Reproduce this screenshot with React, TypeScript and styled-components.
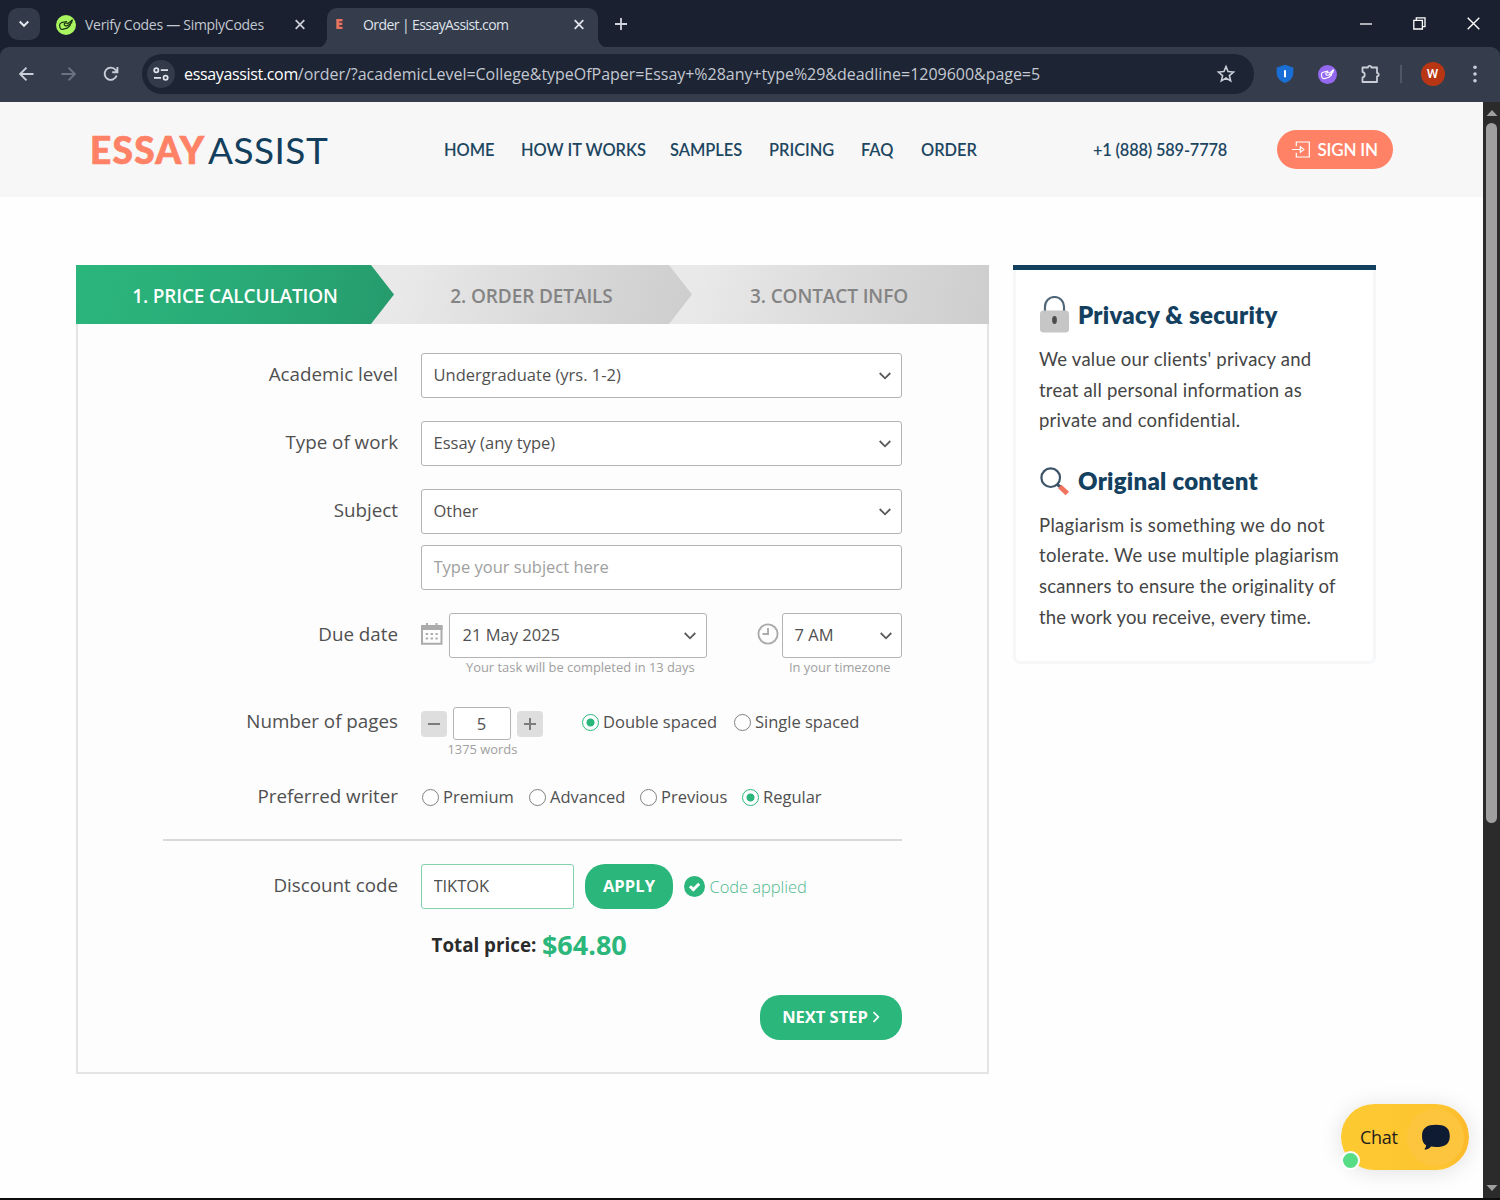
import React from "react";
import styled, { createGlobalStyle } from "styled-components";

const GlobalStyle = createGlobalStyle`
  * { box-sizing: border-box; }
  body { margin: 0; background: #fff; overflow: hidden; }
  svg { display: block; flex: none; }
`;

const sans = `"Open Sans", "Noto Sans", sans-serif`;
const lato = `Lato, "Open Sans", sans-serif`;

const Window = styled.div`
  width: 1500px;
  height: 1200px;
  display: flex;
  flex-direction: column;
  overflow: hidden;
  background: #fff;
  border-bottom: 2px solid #0d0d0d;
`;

/* ---------- browser chrome ---------- */

const TabStrip = styled.div`
  height: 47px;
  flex: none;
  display: flex;
  align-items: flex-start;
  background: #1a202f;
  font-family: ${sans};
`;

const TabSearch = styled.button`
  width: 32px;
  height: 32px;
  margin: 8px 0 0 8px;
  padding: 0;
  border: 0;
  border-radius: 10px;
  background: #333a49;
  display: grid;
  place-items: center;
`;

const Tab = styled.div<{ $active?: boolean; $w: number; $pl: number; $gap: number }>`
  position: relative;
  width: ${(p) => p.$w}px;
  height: ${(p) => (p.$active ? 40 : 33)}px;
  margin-top: ${(p) => (p.$active ? 7.5 : 8)}px;
  margin-right: ${(p) => (p.$active ? 0 : 8)}px;
  padding-left: ${(p) => p.$pl}px;
  padding-right: 12px;
  padding-bottom: ${(p) => (p.$active ? 6 : 0)}px;
  display: flex;
  align-items: center;
  gap: ${(p) => p.$gap}px;
  border-radius: 10px 10px 0 0;
  background: ${(p) => (p.$active ? "#353c4b" : "transparent")};
  color: ${(p) => (p.$active ? "#dfe3ea" : "#c2c8d2")};
  &::before,
  &::after {
    content: "";
    display: ${(p) => (p.$active ? "block" : "none")};
    position: absolute;
    bottom: 0;
    width: 10px;
    height: 10px;
  }
  &::before {
    left: -10px;
    background: radial-gradient(circle at 0 0, transparent 9.5px, #353c4b 10px);
  }
  &::after {
    right: -10px;
    background: radial-gradient(circle at 100% 0, transparent 9.5px, #353c4b 10px);
  }
`;

const TabTitle = styled.span<{ $ls: number }>`
  flex: 1;
  font-size: 14px;
  line-height: 20px;
  white-space: nowrap;
  letter-spacing: ${(p) => p.$ls}px;
`;

const TabLetter = styled.span`
  width: 10px;
  padding-bottom: 1px;
  font: 800 14.5px/20px ${sans};
  color: #e8735f;
`;

const StripIcon = styled.div<{ $ml: number }>`
  height: 47px;
  margin-left: ${(p) => p.$ml}px;
  display: flex;
  align-items: center;
`;

const ToolbarBack = styled.div`
  flex: none;
  background: #1a202f;
`;

const Toolbar = styled.div`
  height: 55px;
  display: flex;
  align-items: center;
  background: #353c4b;
  border-radius: 9px 9px 0 0;
  padding: 0 0 1px 17px;
`;

const NavIcons = styled.div`
  display: flex;
  gap: 22px;
  width: 125px;
`;

const Omnibox = styled.div`
  width: 1112px;
  height: 40px;
  border-radius: 20px;
  background: #1d2433;
  display: flex;
  align-items: center;
  padding: 0 18px 0 5px;
`;

const SiteInfo = styled.div`
  width: 28px;
  height: 28px;
  border-radius: 50%;
  background: #333b4a;
  display: grid;
  place-items: center;
  margin-right: 9px;
`;

const Url = styled.span`
  flex: 1;
  white-space: nowrap;
  font: 400 16px/22px ${sans};
  letter-spacing: -0.03px;
  color: #c3c8d1;
  b {
    font-weight: 400;
    color: #fff;
    letter-spacing: -0.34px;
  }
`;

const Extensions = styled.div`
  display: grid;
  grid-template-columns: 42px 43px 42px 20px 43px 42px;
  align-items: center;
  justify-items: center;
  margin-left: 10px;
`;

const Divider = styled.i`
  width: 2px;
  height: 18px;
  background: #4f5665;
`;

const Avatar = styled.div`
  width: 24px;
  height: 24px;
  border-radius: 50%;
  background: #b93615;
  color: #fff;
  font: 500 13px/24px Roboto, sans-serif;
  text-align: center;
`;

/* ---------- page ---------- */

const Viewport = styled.div`
  flex: 1;
  display: flex;
  min-height: 0;
`;

const Page = styled.div`
  position: relative;
  width: 1483px;
  background: #fefefe;
`;

const Scrollbar = styled.div`
  width: 17px;
  background: #2b2b2b;
  display: flex;
  flex-direction: column;
  align-items: center;
  padding: 7px 0 6px;
`;

const Thumb = styled.div`
  width: 11px;
  height: 700px;
  margin-top: 6px;
  margin-bottom: auto;
  border-radius: 6px;
  background: #9f9f9f;
`;

const SiteHeader = styled.header`
  height: 95px;
  background: #f7f7f7;
  display: flex;
  align-items: center;
  padding-left: 90px;
  font-family: ${lato};
`;

const Logo = styled.div`
  width: 354px;
  display: flex;
  align-items: center;
  font-size: 37px;
  line-height: 40px;
  color: #143f5c;
  white-space: nowrap;
`;

const LogoStrong = styled.span`
  width: 118px;
  font-weight: 900;
  letter-spacing: 1.3px;
  -webkit-text-stroke: 0.7px #ff8266;
  color: #ff8266;
`;

const LogoLight = styled.span`
  font-weight: 400;
  letter-spacing: 0.45px;
`;

const Nav = styled.nav`
  display: grid;
  grid-template-columns: 51px 123px 73px 66px 34px 56px;
  column-gap: 26px;
  width: 649px;
`;

const NavLink = styled.a`
  font-size: 16.4px;
  line-height: 24px;
  font-weight: 600;
  color: #1d4661;
  white-space: nowrap;
`;

const Phone = styled(NavLink)`
  width: 134px;
  letter-spacing: -0.18px;
`;

const SignIn = styled.button`
  width: 116.5px;
  height: 39px;
  margin-left: 49.5px;
  padding: 0 0 0 15px;
  border: 0;
  border-radius: 20px;
  background: #ff8266;
  color: #fff;
  display: flex;
  align-items: center;
  gap: 7px;
  font: 600 17px/24px ${lato};
  white-space: nowrap;
  letter-spacing: -0.2px;
`;

const Main = styled.main`
  display: flex;
  align-items: flex-start;
  gap: 24px;
  padding: 68px 0 0 76px;
`;

const OrderCard = styled.section`
  width: 913px;
`;

const Steps = styled.div`
  height: 59px;
  display: flex;
`;

const Step = styled.div<{ $active?: boolean; $last?: boolean; $w: number; $z: number }>`
  position: relative;
  z-index: ${(p) => p.$z};
  width: ${(p) => p.$w}px;
  margin-right: ${(p) => (p.$last ? 0 : -23)}px;
  padding-top: 2px;
  display: grid;
  place-items: center;
  white-space: nowrap;
  font: 600 19px/24px ${sans};
  letter-spacing: ${(p) => (p.$active ? -0.15 : -0.11)}px;
  color: ${(p) => (p.$active ? "#fff" : "#848484")};
  background: ${(p) =>
    p.$active
      ? "linear-gradient(105deg, #2bb67c 0%, #29ab77 50%, #269b6c 100%)"
      : "linear-gradient(105deg, #e9e9e9 10%, #dadada 55%, #cdcdcd 100%)"};
  clip-path: ${(p) =>
    p.$last ? "none" : "polygon(0 0, calc(100% - 23px) 0, 100% 50%, calc(100% - 23px) 100%, 0 100%)"};
`;

const Form = styled.div`
  height: 750px;
  padding: 29px 0 0 0;
  border: 2px solid #e4e4e4;
  border-top: 0;
  background: #fdfdfd;
  display: flex;
  flex-direction: column;
  font-family: ${sans};
  color: #505050;
`;

const Row = styled.div<{ $h: number; $top?: number }>`
  height: ${(p) => p.$h}px;
  margin-top: ${(p) => p.$top ?? 0}px;
  flex: none;
  display: grid;
  grid-template-columns: 320px 481px;
  column-gap: 23px;
`;

const Label = styled.label<{ $pt?: number }>`
  padding-top: ${(p) => p.$pt ?? 7}px;
  text-align: right;
  font-size: 18.8px;
  line-height: 28px;
  white-space: nowrap;
`;

const Stack = styled.div`
  display: flex;
  flex-direction: column;
  gap: 11px;
`;

const SelectBox = styled.div<{ $w?: number; $pl?: number; $pr?: number }>`
  width: ${(p) => p.$w ?? 481}px;
  height: 45px;
  flex: none;
  border: 1px solid #b3b3b3;
  border-radius: 3px;
  background: #fff;
  display: flex;
  align-items: center;
  justify-content: space-between;
  padding: 0 ${(p) => p.$pr ?? 9.5}px 2px ${(p) => p.$pl ?? 11.5}px;
  font-size: 16.5px;
  line-height: 24px;
  white-space: nowrap;
  svg {
    margin-top: 2px;
  }
`;

const TextInput = styled.input<{ $w: number; $applied?: boolean }>`
  width: ${(p) => p.$w}px;
  height: 45px;
  border: 1px solid ${(p) => (p.$applied ? "#83d2ae" : "#b3b3b3")};
  border-radius: 3px;
  background: #fff;
  padding: 0 11.5px 2px;
  font: 400 16.5px/24px ${sans};
  letter-spacing: ${(p) => (p.$applied ? -0.05 : 0)}px;
  color: #505050;
  outline: none;
  &::placeholder {
    color: #a0a0a0;
    opacity: 1;
  }
`;

const Inline = styled.div`
  display: flex;
  align-items: flex-start;
`;

const IconCell = styled.div<{ $w: number; $ml?: number }>`
  width: ${(p) => p.$w}px;
  margin-left: ${(p) => p.$ml ?? 0}px;
  padding-top: 10px;
`;

const Hint = styled.div<{ $ml?: number }>`
  margin-left: ${(p) => p.$ml ?? 0}px;
  font-size: 12.9px;
  line-height: 18px;
  color: #a0a0a0;
  white-space: nowrap;
`;

const Counter = styled.div`
  display: flex;
  align-items: center;
  gap: 6px;
`;

const CountButton = styled.button`
  width: 26px;
  height: 26px;
  padding: 0;
  border: 0;
  border-radius: 4px;
  background: #dedede;
  display: grid;
  place-items: center;
`;

const CountInput = styled.input`
  width: 58px;
  height: 33px;
  border: 1px solid #b3b3b3;
  border-radius: 3px;
  background: #fff;
  padding: 0 1px 0 0;
  text-align: center;
  font: 400 16.5px/24px ${sans};
  color: #505050;
  outline: none;
`;

const RadioGroup = styled.div<{ $ml?: number; $mt: number; $cols: string }>`
  margin: ${(p) => p.$mt}px 0 0 ${(p) => p.$ml ?? 0}px;
  display: grid;
  grid-template-columns: ${(p) => p.$cols};
  align-items: start;
`;

const RadioLabel = styled.label`
  display: flex;
  align-items: center;
  gap: 4px;
  font-size: 16.5px;
  line-height: 24px;
  white-space: nowrap;
`;

const Dot = styled.span<{ $on?: boolean }>`
  width: 17px;
  height: 17px;
  flex: none;
  border-radius: 50%;
  border: 1px solid ${(p) => (p.$on ? "#2bb67c" : "#808080")};
  background: ${(p) => (p.$on ? "radial-gradient(circle, #2bb67c 3.6px, #fff 4.4px)" : "#fff")};
`;

const Rule = styled.hr`
  width: 739px;
  height: 1.5px;
  flex: none;
  margin: 24px 0 0 85px;
  border: 0;
  background: #dadada;
`;

const Apply = styled.button`
  width: 88px;
  height: 45px;
  margin-left: 11px;
  padding: 0;
  border: 0;
  border-radius: 20px;
  background: #2bb67c;
  color: #fff;
  font: 700 16.5px/24px ${sans};
  letter-spacing: 0.1px;
`;

const Applied = styled.div`
  height: 46px;
  margin-left: 10.5px;
  display: flex;
  align-items: center;
  gap: 5px;
  font-size: 16.5px;
  font-weight: 300;
  letter-spacing: -0.05px;
  color: #4fb98d;
  white-space: nowrap;
`;

const Total = styled.div`
  display: flex;
  align-items: center;
  gap: 5.5px;
  margin: 18px 0 0 353.5px;
  height: 36px;
  line-height: 36px;
  font-size: 18.8px;
  font-weight: 700;
  color: #2b2b2b;
  white-space: nowrap;
`;

const Price = styled.span`
  font-size: 27px;
  color: #2bb67c;
`;

const Next = styled.button`
  width: 142px;
  height: 45px;
  margin: 32px 0 0 682px;
  padding: 0 0 1px 0;
  border: 0;
  border-radius: 20px;
  background: #2bb67c;
  color: #fff;
  display: flex;
  align-items: center;
  justify-content: center;
  gap: 4px;
  font: 700 16.5px/24px ${sans};
  letter-spacing: -0.02px;
  white-space: nowrap;
`;

const Aside = styled.aside`
  width: 363px;
  border-top: 5px solid #13405f;
  font-family: ${lato};
  color: #454545;
`;

const AsideBody = styled.div`
  height: 394px;
  border: 3px solid #f6f7f8;
  border-top: 0;
  border-radius: 0 0 7px 7px;
  padding: 25px 0 0 23px;
  background: #fff;
`;

const AsideTitle = styled.h3<{ $dy?: number }>`
  height: 38px;
  margin: 0;
  display: flex;
  align-items: center;
  gap: 8px;
  font-size: 24px;
  font-weight: 800;
  line-height: 38px;
  color: #13405f;
  white-space: nowrap;
  letter-spacing: 0.26px;
  span {
    padding-top: ${(p) => p.$dy ?? 0}px;
  }
`;

const AsideText = styled.p<{ $mt: number }>`
  margin: ${(p) => p.$mt}px 0 26px;
  font-size: 18.5px;
  line-height: 30.6px;
  white-space: nowrap;
`;

const Line = styled.span<{ $ls: number }>`
  display: block;
  letter-spacing: ${(p) => p.$ls}px;
`;

const Chat = styled.button`
  position: absolute;
  left: 1341px;
  top: 1002px;
  width: 128px;
  height: 66px;
  padding: 0 5px 0 19px;
  border: 0;
  border-radius: 33px;
  background: linear-gradient(90deg, #fdca32, #fdc42f 80%, #fdb92b);
  box-shadow: 0 2px 22px rgba(0, 0, 0, 0.12);
  display: flex;
  align-items: center;
  justify-content: space-between;
  font: 400 18px/24px ${sans};
  letter-spacing: -0.3px;
  color: #1d1d1d;
`;

const ChatBubble = styled.span`
  width: 57px;
  height: 57px;
  border-radius: 50%;
  background: #fdc43e;
  display: grid;
  place-items: center;
`;

const Online = styled.i`
  position: absolute;
  left: 0px;
  top: 47px;
  width: 19px;
  height: 19px;
  border-radius: 50%;
  border: 2px solid #fff;
  background: #57dd85;
`;

/* ---------- icons ---------- */

const Chevron = () => (
  <svg width="14" height="10" viewBox="0 0 14 10" fill="none" stroke="#5a5a5a" strokeWidth="1.8">
    <path d="M1.7 2 7 7.3 12.3 2" />
  </svg>
);

const Cross = ({ color }: { color: string }) => (
  <svg width="14" height="14" viewBox="0 0 14 14" stroke={color} strokeWidth="1.8">
    <path d="M2.7 2.2l8.6 8.6M11.3 2.2l-8.6 8.6" />
  </svg>
);

const TagHand = ({ size, bg, line }: { size: number; bg: string; line: string }) => (
  <svg width={size} height={size} viewBox="0 0 20 20" fill="none" stroke={line} strokeWidth="1.2" strokeLinejoin="round" strokeLinecap="round">
    <circle cx="10" cy="10" r="10" fill={bg} stroke="none" />
    <path d="M10.5 6.5 5.4 7.7c-1.2.4-1.9 1.300-1.800 2.500l.4 2.400c.3 1.300 1.200 1.900 2.500 1.700l4.600-1.100 3-2.700.4-2.700" />
    <path d="M11.200 10.600c-1.600.5-3-.1-3-1.300 0-1.100 1.300-1.600 2.600-1.200l1.200.4 4.300-3.500-.7 2.700-2.300 1.900z" />
  </svg>
);

const Select = ({ value, w, pl, pr }: { value: string; w?: number; pl?: number; pr?: number }) => (
  <SelectBox $w={w} $pl={pl} $pr={pr}>
    {value}
    <Chevron />
  </SelectBox>
);

const Radio = ({ text, on }: { text: string; on?: boolean }) => (
  <RadioLabel>
    <Dot $on={on} />
    {text}
  </RadioLabel>
);

const BrowserChrome = () => (
  <>
    <TabStrip>
      <TabSearch>
        <svg width="12" height="10" viewBox="0 0 12 10" fill="none" stroke="#e3e6ec" strokeWidth="2">
          <path d="M1.7 2.5 6 6.8l4.3-4.3" />
        </svg>
      </TabSearch>
      <Tab $w={279} $pl={16} $gap={9}>
        <TagHand size={20} bg="#a8f560" line="#1d3413" />
        <TabTitle $ls={-0.28}>Verify Codes — SimplyCodes</TabTitle>
        <Cross color="#c9ced8" />
      </Tab>
      <Tab $active $w={271} $pl={8} $gap={18}>
        <TabLetter>E</TabLetter>
        <TabTitle $ls={-0.58}>Order | EssayAssist.com</TabTitle>
        <Cross color="#dfe3ea" />
      </Tab>
      <StripIcon $ml={16}>
        <svg width="14" height="14" viewBox="0 0 14 14" stroke="#cfd4dd" strokeWidth="1.8">
          <path d="M7 1v12M1 7h12" />
        </svg>
      </StripIcon>
      <StripIcon $ml={732}>
        <svg width="12" height="12" viewBox="0 0 12 12" stroke="#fff" strokeWidth="1.3">
          <path d="M0 6h12" />
        </svg>
      </StripIcon>
      <StripIcon $ml={41}>
        <svg width="13" height="13" viewBox="0 0 13 13" fill="none" stroke="#fff" strokeWidth="1.3">
          <path d="M.8 3.4h8.6v8.6H.8zM3.3 3.2V.9h8.7v8.7H9.6" />
        </svg>
      </StripIcon>
      <StripIcon $ml={41}>
        <svg width="13" height="13" viewBox="0 0 13 13" stroke="#fff" strokeWidth="1.4">
          <path d="M.7.7l11.6 11.6M12.3.7.7 12.3" />
        </svg>
      </StripIcon>
    </TabStrip>
    <ToolbarBack>
      <Toolbar>
        <NavIcons>
          <svg width="20" height="20" viewBox="0 0 20 20" fill="none" stroke="#c9ced8" strokeWidth="1.9">
            <path d="M16.5 10h-13M9.5 3.6 3.1 10l6.4 6.4" />
          </svg>
          <svg width="20" height="20" viewBox="0 0 20 20" fill="none" stroke="#6b7281" strokeWidth="1.9">
            <path d="M2.5 10h13M9.5 3.6l6.4 6.4-6.4 6.4" />
          </svg>
          <svg width="20" height="20" viewBox="0 0 20 20" fill="none" stroke="#c9ced8" strokeWidth="1.9">
            <path d="M15.6 11.5A6.1 6.1 0 1 1 14.6 6L16 7.6M16.4 3v5.2h-5.2" />
          </svg>
        </NavIcons>
        <Omnibox>
          <SiteInfo>
            <svg width="16" height="14" viewBox="0 0 16 14" fill="none" stroke="#dfe3ea" strokeWidth="1.8">
              <circle cx="3.3" cy="3.2" r="2.1" />
              <path d="M7.8 3.2H15M1 10.8h7" />
              <circle cx="12.6" cy="10.8" r="2.1" />
            </svg>
          </SiteInfo>
          <Url>
            <b>essayassist.com</b>/order/?academicLevel=College&amp;typeOfPaper=Essay+%28any+type%29&amp;deadline=1209600&amp;page=5
          </Url>
          <svg width="20" height="20" viewBox="0 0 20 20" fill="none" stroke="#c9ced8" strokeWidth="1.6">
            <path d="M10 2.6l2.1 5 5.4.45-4.1 3.55 1.25 5.3L10 14.05 5.35 16.9l1.25-5.3L2.5 8.05l5.4-.45z" />
          </svg>
        </Omnibox>
        <Extensions>
          <svg width="18" height="20" viewBox="0 0 18 20">
            <path d="M9 .8l8.3 2.6v5.3c0 4.8-3.2 8.3-8.3 10.4C3.9 17 .7 13.5.7 8.7V3.4z" fill="#1a6fd6" />
            <path d="M9 6.2v7" stroke="#fff" strokeWidth="2" />
          </svg>
          <TagHand size={19} bg="#9568f0" line="#fff" />
          <svg width="21" height="21" viewBox="0 0 21 21" fill="none" stroke="#c9ced8" strokeWidth="1.8" strokeLinejoin="round">
            <path d="M2.5 3.5H8a1.7 1.7 0 0 1 3.4 0h5.6v5.4a1.7 1.7 0 0 1 0 3.4v5.7H2.5v-4.6c3-.4 3-4.9 0-5.300z" />
          </svg>
          <Divider />
          <Avatar>W</Avatar>
          <svg width="6" height="20" viewBox="0 0 6 20" fill="#c9ced8">
            <circle cx="3" cy="3.3" r="1.8" />
            <circle cx="3" cy="10" r="1.8" />
            <circle cx="3" cy="16.7" r="1.8" />
          </svg>
        </Extensions>
      </Toolbar>
    </ToolbarBack>
  </>
);

const Header = () => (
  <SiteHeader>
    <Logo>
      <LogoStrong>ESSAY</LogoStrong>
      <LogoLight>ASSIST</LogoLight>
    </Logo>
    <Nav>
      <NavLink>HOME</NavLink>
      <NavLink>HOW IT WORKS</NavLink>
      <NavLink>SAMPLES</NavLink>
      <NavLink>PRICING</NavLink>
      <NavLink>FAQ</NavLink>
      <NavLink>ORDER</NavLink>
    </Nav>
    <Phone>+1 (888) 589-7778</Phone>
    <SignIn>
      <svg width="19" height="17" viewBox="0 0 19 17" fill="none" stroke="#fff" strokeWidth="1.2">
        <path d="M4.3 5.3V1h13v15h-13v-4.3M0 8.5h8.3M8.3 5.7l3.6 2.8-3.6 2.8z" />
      </svg>
      SIGN IN
    </SignIn>
  </SiteHeader>
);

const OrderForm = () => (
  <OrderCard>
    <Steps>
      <Step $active $w={318} $z={3}>1. PRICE CALCULATION</Step>
      <Step $w={321} $z={2}>2. ORDER DETAILS</Step>
      <Step $last $w={320} $z={1}>3. CONTACT INFO</Step>
    </Steps>
    <Form>
      <Row $h={45}>
        <Label>Academic level</Label>
        <Select value="Undergraduate (yrs. 1-2)" />
      </Row>
      <Row $h={45} $top={23}>
        <Label>Type of work</Label>
        <Select value="Essay (any type)" />
      </Row>
      <Row $h={101} $top={23}>
        <Label>Subject</Label>
        <Stack>
          <Select value="Other" />
          <TextInput $w={481} placeholder="Type your subject here" />
        </Stack>
      </Row>
      <Row $h={64} $top={23}>
        <Label>Due date</Label>
        <Inline>
          <IconCell $w={28}>
            <svg width="22" height="22" viewBox="0 0 22 22" fill="none">
              <path d="M1 3h19.5v17.7H1z" stroke="#ababab" strokeWidth="2" />
              <path d="M0 2.5h21.5v4.500H0zM5 0h2v3H5zM14.500 0h2v3h-2z" fill="#ababab" />
              <path d="M4.7 11h12M4.7 15.5h12" stroke="#ababab" strokeWidth="2" strokeDasharray="2.4 2.5" />
            </svg>
          </IconCell>
          <div>
            <Select value="21 May 2025" w={258} pl={12.5} pr={9} />
            <Hint $ml={17}>Your task will be completed in 13 days</Hint>
          </div>
          <IconCell $w={25} $ml={50}>
            <svg width="22" height="22" viewBox="0 0 22 22" fill="none" stroke="#ababab" strokeWidth="1.9">
              <circle cx="11" cy="11" r="9.6" />
              <path d="M11 5v6H5.5" />
            </svg>
          </IconCell>
          <div>
            <Select value="7 AM" w={120} pr={8} />
            <Hint $ml={7}>In your timezone</Hint>
          </div>
        </Inline>
      </Row>
      <Row $h={51} $top={30}>
        <Label $pt={0}>Number of pages</Label>
        <Inline>
          <div>
            <Counter>
              <CountButton>
                <svg width="14" height="14" viewBox="0 0 14 14" stroke="#7b7b7b" strokeWidth="2">
                  <path d="M1 7h12" />
                </svg>
              </CountButton>
              <CountInput defaultValue="5" />
              <CountButton>
                <svg width="14" height="14" viewBox="0 0 14 14" stroke="#7b7b7b" strokeWidth="2">
                  <path d="M1 7h12M7 1v12" />
                </svg>
              </CountButton>
            </Counter>
            <Hint $ml={26.5}>1375 words</Hint>
          </div>
          <RadioGroup $ml={39} $mt={3} $cols="152px 120px">
            <Radio text="Double spaced" on />
            <Radio text="Single spaced" />
          </RadioGroup>
        </Inline>
      </Row>
      <Row $h={40} $top={17}>
        <Label>Preferred writer</Label>
        <RadioGroup $ml={1} $mt={10} $cols="107px 111px 102px 90px">
          <Radio text="Premium" />
          <Radio text="Advanced" />
          <Radio text="Previous" />
          <Radio text="Regular" on />
        </RadioGroup>
      </Row>
      <Rule />
      <Row $h={45} $top={23}>
        <Label>Discount code</Label>
        <Inline>
          <TextInput $w={153} $applied defaultValue="TIKTOK" />
          <Apply>APPLY</Apply>
          <Applied>
            <svg width="21" height="21" viewBox="0 0 21 21" fill="none">
              <circle cx="10.5" cy="10.5" r="10.5" fill="#2bb67c" />
              <path d="M6 10.3l3.3 3.3 5.9-5.9" stroke="#fff" strokeWidth="3" />
            </svg>
            Code applied
          </Applied>
        </Inline>
      </Row>
      <Total>
        <span>Total price:</span>
        <Price>$64.80</Price>
      </Total>
      <Next>
        NEXT STEP
        <svg width="8" height="12" viewBox="0 0 8 12" fill="none" stroke="#fff" strokeWidth="1.7">
          <path d="M1.5 1.2 6.3 6l-4.8 4.8" />
        </svg>
      </Next>
    </Form>
  </OrderCard>
);

const SideInfo = () => (
  <Aside>
    <AsideBody>
      <AsideTitle $dy={2}>
        <svg width="31" height="37" viewBox="0 0 31 37">
          <path d="M6 15v-4.500a9.500 9.500 0 0 1 19 0V15" fill="none" stroke="#50687a" strokeWidth="2.2" />
          <rect x="1" y="14.5" width="29" height="22" rx="3.5" fill="#c6c6c6" />
          <ellipse cx="15.5" cy="24" rx="2.4" ry="4" fill="#4c4c4c" />
        </svg>
        <span>Privacy &amp; security</span>
      </AsideTitle>
      <AsideText $mt={11}>
        <Line $ls={0.22}>We value our clients' privacy and</Line>
        <Line $ls={0.21}>treat all personal information as</Line>
        <Line $ls={0.25}>private and confidential.</Line>
      </AsideText>
      <AsideTitle>
        <svg width="31" height="30" viewBox="0 0 31 30" fill="none">
          <circle cx="11.7" cy="11.7" r="9.3" stroke="#3d5468" strokeWidth="2.2" />
          <path d="M17.8 18l4 3.3" stroke="#3d5468" strokeWidth="3" />
          <path d="M20.8 20.5l7.5 7" stroke="#f0735d" strokeWidth="5" />
        </svg>
        <span>Original content</span>
      </AsideTitle>
      <AsideText $mt={10}>
        <Line $ls={0.33}>Plagiarism is something we do not</Line>
        <Line $ls={0.3}>tolerate. We use multiple plagiarism</Line>
        <Line $ls={0.19}>scanners to ensure the originality of</Line>
        <Line $ls={0.13}>the work you receive, every time.</Line>
      </AsideText>
    </AsideBody>
  </Aside>
);

export default function App() {
  return (
    <Window>
      <GlobalStyle />
      <BrowserChrome />
      <Viewport>
        <Page>
          <Header />
          <Main>
            <OrderForm />
            <SideInfo />
          </Main>
          <Chat>
            Chat
            <ChatBubble>
              <svg width="30" height="27" viewBox="0 0 30 27">
                <path d="M15 .8c8.5 0 13.8 2.7 13.8 11.2S23.5 23 15 23c-1.8 0-3.5-.1-5-.4-1.3 1.7-3.5 3-5.6 3.2-.8 0-1-.6-.5-1.2.8-.9 1.2-2 1.1-3.3C2.2 19.5 1 16.6 1 12 1 3.5 6.5.8 15 .8z" fill="#0f1a33" />
              </svg>
            </ChatBubble>
            <Online />
          </Chat>
        </Page>
        <Scrollbar>
          <svg width="12" height="8" viewBox="0 0 12 8" fill="#9f9f9f">
            <path d="M6 1l5.500 6H.5z" />
          </svg>
          <Thumb />
          <svg width="12" height="8" viewBox="0 0 12 8" fill="#9f9f9f">
            <path d="M6 7l5.500-6H.5z" />
          </svg>
        </Scrollbar>
      </Viewport>
    </Window>
  );
}
